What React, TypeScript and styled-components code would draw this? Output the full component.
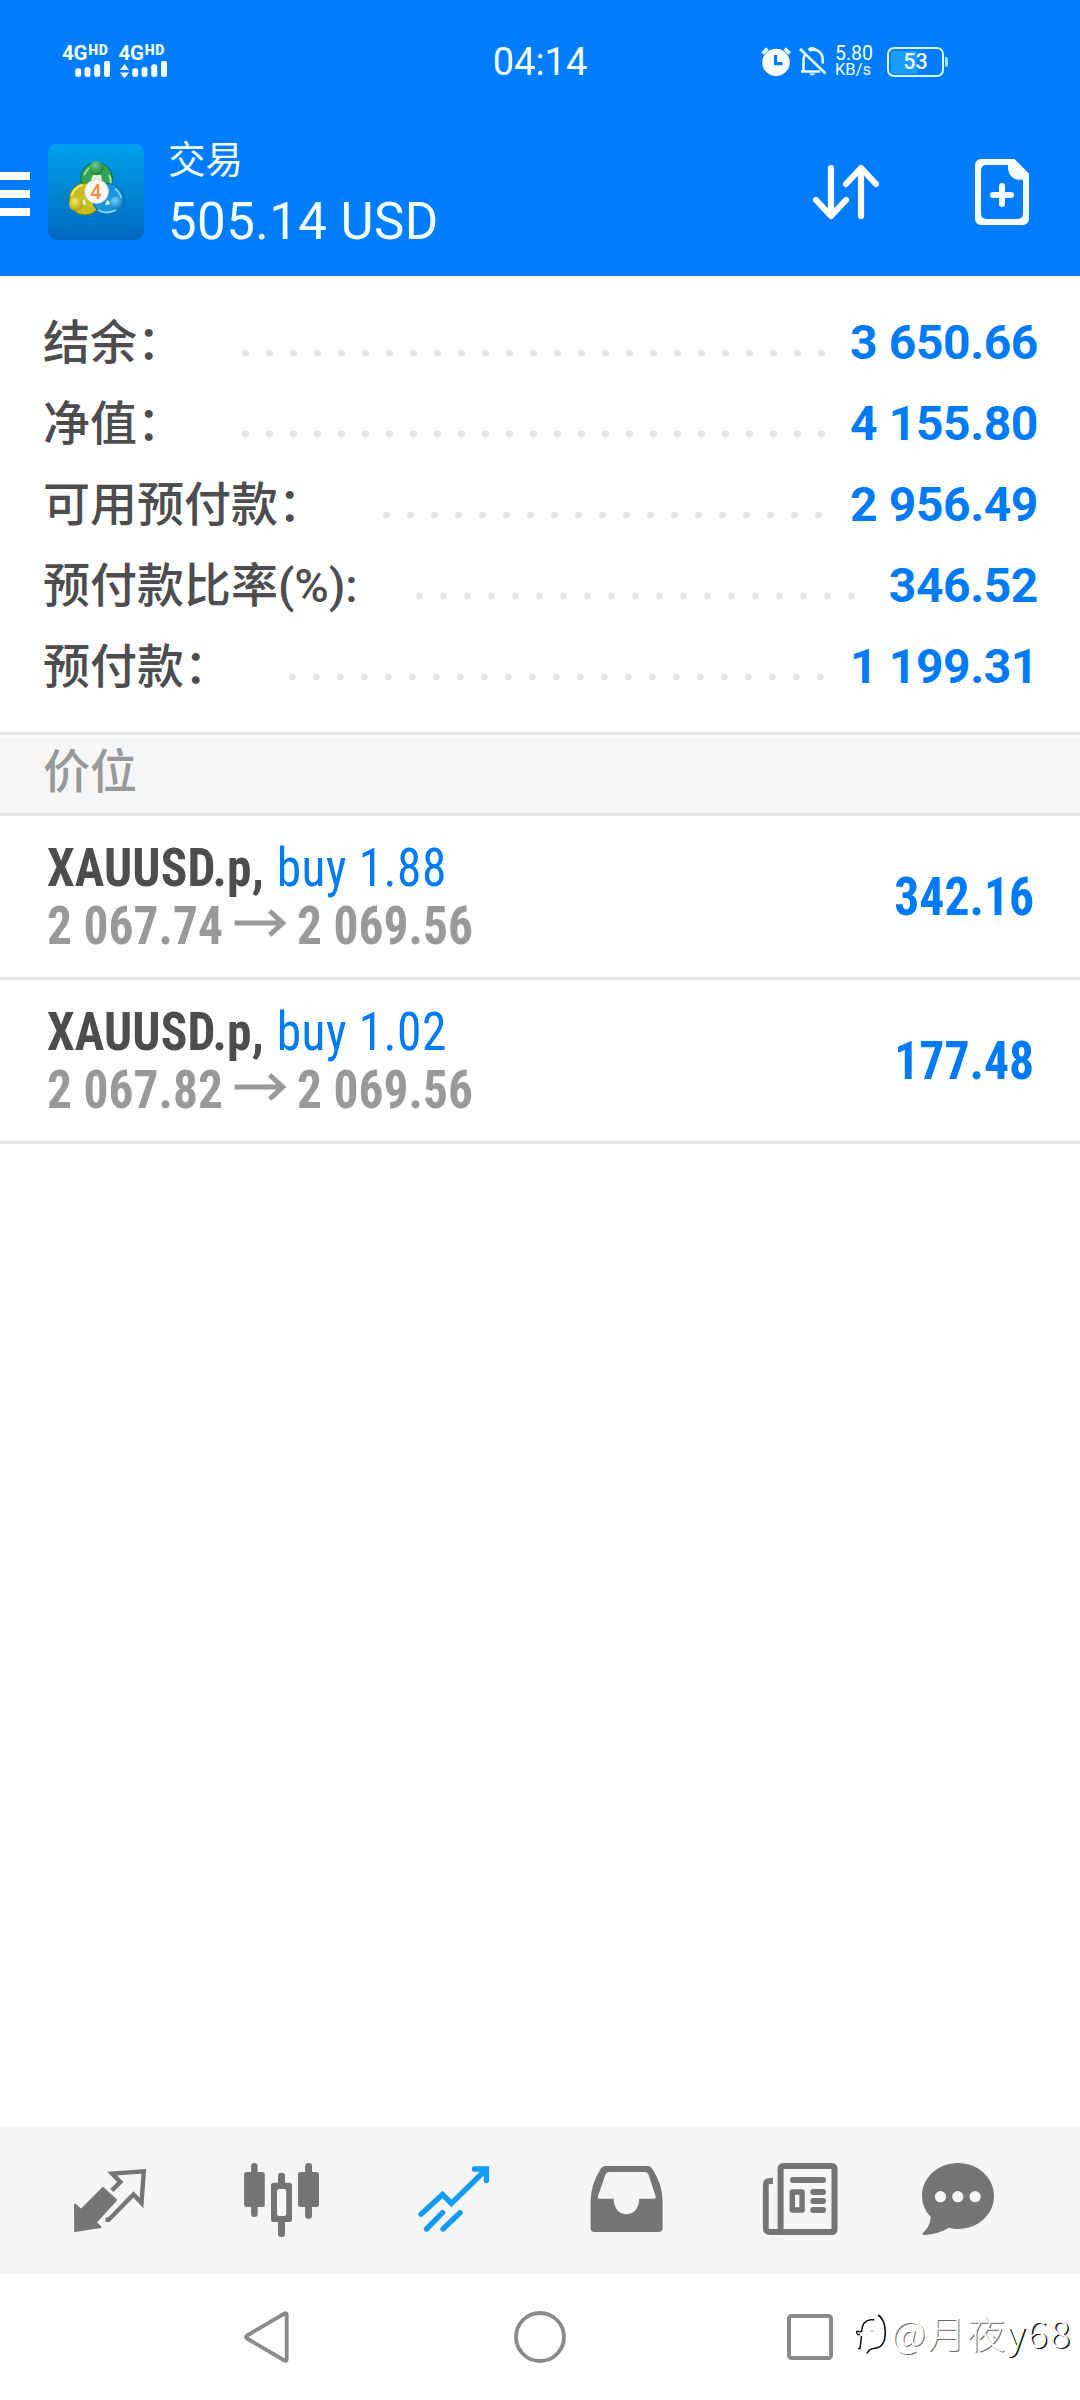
import React from "react";
import styled, { createGlobalStyle } from "styled-components";

const Global = createGlobalStyle`
  * { box-sizing: border-box; }
  body { margin: 0; background: #fefefe; }
`;

const SANS = `Roboto, "Noto Sans CJK SC", sans-serif`;
const NARROW = `"Roboto Condensed", Roboto, "Noto Sans CJK SC", sans-serif`;

const Screen = styled.div`
  position: relative;
  display: flex;
  flex-direction: column;
  width: 1080px;
  height: 2400px;
  overflow: hidden;
  background: #fefefe;
  font-family: ${SANS};
`;

const Header = styled.header`
  display: flex;
  flex-direction: column;
  height: 276px;
  flex: none;
  background: #007dff;
  color: #f2fdff;
`;

const StatusBar = styled.div`
  display: flex;
  align-items: center;
  height: 124px;
  padding: 0 62px;
`;

const StatusSide = styled.div<{ $end?: boolean }>`
  display: flex;
  flex: none;
  width: 429px;
  align-items: center;
  gap: 8px;
  justify-content: ${(p) => (p.$end ? "flex-end" : "flex-start")};
  padding-right: ${(p) => (p.$end ? "70px" : "0")};
`;

const Sim = styled.div`
  display: flex;
  flex-direction: column;
  align-items: flex-start;
  width: 48.5px;
`;

const SimLabel = styled.span`
  display: flex;
  align-items: flex-start;
  gap: 1px;
  height: 16px;
  font-size: 20.5px;
  line-height: 16px;
  font-weight: 700;
  letter-spacing: -0.3px;
`;

const SimSup = styled.span`
  font-size: 14px;
  line-height: 11px;
  font-weight: 900;
  letter-spacing: 0.7px;
`;

const Clock = styled.div`
  width: 98px;
  text-align: center;
  font-size: 38px;
  line-height: 44px;
  font-weight: 450;
  white-space: nowrap;
`;

const Speed = styled.div`
  display: flex;
  flex-direction: column;
  width: 40px;
  margin: 0 4px 0 0;
  font-size: 19.5px;
  line-height: 16px;
`;

const SpeedUnit = styled.span`
  font-size: 16.5px;
`;

const Battery = styled.div`
  display: flex;
  align-items: center;
  justify-content: center;
  width: 57px;
  height: 30px;
  border: 2.5px solid #d5f6ff;
  border-radius: 7px;
  background: linear-gradient(90deg, #1a9dff 52%, transparent 52%) content-box;
  padding: 1.5px;
  font-size: 21.5px;
  line-height: 24px;
  font-weight: 500;
`;

const BatteryTip = styled.span`
  width: 3px;
  height: 10px;
  margin-left: -7px;
  border-radius: 0 2px 2px 0;
  background: #9fe0ff;
`;

const TitleBar = styled.div`
  display: flex;
  align-items: center;
  height: 136px;
  padding-right: 51px;
`;

const Burger = styled.div`
  display: flex;
  flex-direction: column;
  gap: 10px;
  width: 30px;
  margin: 4px 18px 0 0;
`;

const BurgerLine = styled.span`
  height: 8px;
  background: #fff;
`;

const Titles = styled.div`
  display: flex;
  flex: 1;
  flex-direction: column;
  margin-left: 24px;
`;

const Title = styled.h1`
  margin: 0;
  font-size: 37.5px;
  line-height: 56px;
  font-weight: 400;
`;

const Profit = styled.div`
  padding-top: 2px;
  font-size: 51px;
  line-height: 63px;
  font-weight: 400;
  letter-spacing: 0.45px;
`;

const Actions = styled.div`
  display: flex;
  align-items: center;
  gap: 96px;
`;

const Summary = styled.section`
  display: flex;
  flex-direction: column;
  height: 456px;
  flex: none;
  padding: 26px 42px 0 43px;
`;

const SummaryRow = styled.div`
  display: flex;
  align-items: center;
  height: 81px;
`;

const Label = styled.span`
  font-size: 47px;
  line-height: 81px;
  font-weight: 500;
  color: #4d4d4f;
  white-space: nowrap;
`;

const Leader = styled.span`
  flex: 1;
  height: 8px;
  margin: 21px 20px 0 58px;
  background: radial-gradient(circle at 3.5px 4px, #e3e3e3 3px, transparent 4px) 0 0 / 24px 8px repeat-x;
`;

const Value = styled.span`
  font-size: 48px;
  line-height: 81px;
  font-weight: 700;
  letter-spacing: -0.4px;
  color: #007bf5;
  white-space: nowrap;
`;

const SectionHead = styled.div`
  height: 84px;
  flex: none;
  border-top: 3px solid #e4e4e4;
  border-bottom: 3px solid #e4e4e4;
  background: linear-gradient(#fefefe 3px, #f6f6f6 3px);
  padding-left: 43px;
  font-size: 47px;
  line-height: 73px;
  font-weight: 500;
  color: #97999b;
`;

const Position = styled.div`
  display: flex;
  align-items: center;
  justify-content: space-between;
  height: 164px;
  flex: none;
  padding: 0 46px 0 47px;
  border-bottom: 3px solid #e4e4e4;
  font-family: ${NARROW};
  font-stretch: 75%;
  font-size: 54px;
  font-weight: 700;
  white-space: nowrap;
`;

const PositionInfo = styled.div`
  display: flex;
  flex-direction: column;
  transform: scaleX(0.915);
  transform-origin: left center;
`;

const PositionLine = styled.div<{ $muted?: boolean }>`
  display: flex;
  align-items: center;
  gap: ${(p) => (p.$muted ? "13px" : "14px")};
  line-height: 58px;
  letter-spacing: ${(p) => (p.$muted ? "0.05px" : "0.15px")};
  color: ${(p) => (p.$muted ? "#97999b" : "#4d4d4f")};
`;

const Side = styled.span`
  font-weight: 450;
  letter-spacing: 0.5px;
  color: #007bf5;
`;

const PositionProfit = styled.div`
  color: #007bf5;
  transform: scaleX(0.92);
  transform-origin: right center;
`;

const PriceArrow = styled.svg`
  width: 57px;
  height: 28px;
  margin-right: -2px;
  overflow: visible;
`;

const TabBar = styled.nav`
  display: flex;
  flex: none;
  height: 147px;
  margin-top: auto;
  padding: 0 24px;
  background: #f5f5f5;
`;

const Tab = styled.svg<{ $active?: boolean }>`
  width: 172px;
  height: 146px;
  color: ${(p) => (p.$active ? "#129bf6" : "#757575")};
`;

const NavBar = styled.div`
  display: flex;
  flex: none;
  align-items: center;
  justify-content: space-between;
  height: 126px;
  padding: 0 245px 0 242px;
`;

const Watermark = styled.div`
  position: absolute;
  right: 8px;
  top: 2302px;
  display: flex;
  align-items: center;
  gap: 4px;
  font-family: "Noto Sans CJK SC", sans-serif;
  font-size: 38px;
  line-height: 60px;
  font-weight: 300;
  letter-spacing: 1.6px;
  color: #fff;
  text-shadow: 1px 1px 0 #6a6a6a;
  white-space: nowrap;
`;

const WatermarkTail = styled.span`
  letter-spacing: 2px;
  text-shadow: 1.5px 1px 0 #111;
`;

const SUMMARY = [
  ["结余：", "3 650.66"],
  ["净值：", "4 155.80"],
  ["可用预付款：", "2 956.49"],
  ["预付款比率(%):", "346.52"],
  ["预付款：", "1 199.31"],
];

const POSITIONS = [
  { symbol: "XAUUSD.p,", side: "buy 1.88", open: "2 067.74", now: "2 069.56", profit: "342.16" },
  { symbol: "XAUUSD.p,", side: "buy 1.02", open: "2 067.82", now: "2 069.56", profit: "177.48" },
];

const Bars = ({ arrows }: { arrows?: boolean }) => (
  <svg width="49" height="18" viewBox="0 0 49 18" fill="currentColor">
    {arrows && <path d="M1 9 5.5 3 10 9zM1 11.5h9L5.5 17.5z" />}
    <rect x="13.2" y="7.3" width="6" height="8.7" rx="2.5" />
    <rect x="22.5" y="6" width="6" height="10" rx="2.5" />
    <rect x="32.2" y="3.3" width="6" height="12.7" rx="2.5" />
    <rect x="42" y="0" width="6" height="16" rx="2" />
  </svg>
);

const Alarm = () => (
  <svg width="30" height="30" viewBox="761 48 30 30">
    <circle cx="776" cy="63.4" r="13.7" fill="#fff" />
    <path d="M762.5 54.5 767.5 49.5M789.8 54.5 784.8 49.5" stroke="#e8fbff" strokeWidth="3.4" />
    <path d="M775.6 56v8.6h7" stroke="#007dff" strokeWidth="3.2" fill="none" />
  </svg>
);

const Muted = () => (
  <svg width="28" height="30" viewBox="798 48 28 30" fill="none" stroke="#e8fbff" strokeWidth="2.6">
    <path d="M799 50 824.5 74.5" />
    <path d="M800 72.5H819M802.5 72V61q0-3.500 2-6M808 51.500q9-3 13 5 .8 2 .8 8" />
    <path d="M808 74.5h6.500q-3.200 4-6.500 0z" fill="#e8fbff" stroke="none" />
    <path d="M807.500 51 811 48.500 815 51" />
  </svg>
);

const AppLogo = () => (
  <svg width="96" height="96" viewBox="0 0 96 96">
    <defs>
      <linearGradient id="bg" x1="0" y1="0" x2="0" y2="1">
        <stop offset="0" stopColor="#009fee" />
        <stop offset="0.5" stopColor="#0087d2" />
        <stop offset="1" stopColor="#0068c2" />
      </linearGradient>
      <radialGradient id="green" cx="0.4" cy="0.3" r="0.8">
        <stop offset="0" stopColor="#6fc98a" />
        <stop offset="1" stopColor="#0c7a32" />
      </radialGradient>
      <radialGradient id="gold" cx="0.4" cy="0.3" r="0.8">
        <stop offset="0" stopColor="#f2e75c" />
        <stop offset="1" stopColor="#a39a0c" />
      </radialGradient>
      <radialGradient id="sky" cx="0.4" cy="0.3" r="0.8">
        <stop offset="0" stopColor="#6fd0ff" />
        <stop offset="1" stopColor="#0570b8" />
      </radialGradient>
    </defs>
    <rect width="96" height="96" rx="9" fill="url(#bg)" />
    <path d="M0 16H96M0 32H96M0 48H96M0 64H96M0 80H96M16 0V96M32 0V96M48 0V96M64 0V96M80 0V96" stroke="#2aa8ea" strokeOpacity="0.1" />
    <circle cx="48.500" cy="34.500" r="16" fill="#35a355" stroke="#0b6b3a" />
    <path d="M36 31q4-7 8-9M61 31q3 6 1 12" stroke="#a5e0a5" strokeWidth="1.800" fill="none" />
    <circle cx="37" cy="55" r="16" fill="#c8bd1c" stroke="#6b7a1a" />
    <path d="M23.500 52q3-9 11-11" stroke="#f0e98a" strokeWidth="2" fill="none" />
    <circle cx="60" cy="55" r="15.500" fill="#1696dc" stroke="#0a5fa5" />
    <path d="M50 66q8 5 18 0M67 45q5 3 6 9" stroke="#7fd3fa" strokeWidth="1.800" fill="none" />
    <path d="M31 60 37 55 38 61zM65 60 59 56 57 61zM45 31h8l1 5H43z" fill="#e6f3da" />
    <circle cx="48.500" cy="24" r="7.200" fill="url(#green)" />
    <circle cx="28" cy="60" r="7" fill="url(#gold)" />
    <circle cx="68" cy="59" r="6.500" fill="url(#sky)" />
    <circle cx="48.500" cy="47.500" r="12" fill="#f8f8f6" stroke="#c9c9b8" strokeWidth="0.8" />
    <text x="48" y="54.800" textAnchor="middle" fontSize="20" fontWeight="500" fill="#f68a3c">4</text>
  </svg>
);

const Sort = () => (
  <svg width="66" height="56" viewBox="813 164 66 56" fill="none" stroke="#fff" strokeWidth="6.2" strokeLinecap="round" strokeLinejoin="round">
    <path d="M831 168V215.500M816 200 831 216 846 200M861 168.500V216M846 184 861 168 876 184" />
  </svg>
);

const NewOrder = () => (
  <svg width="54" height="66" viewBox="975 159 54 66">
    <path fillRule="evenodd" fill="#f4feff" d="M981 159H1014.500L1029 173.500V219a6 6 0 0 1-6 6H981a6 6 0 0 1-6-6V165a6 6 0 0 1 6-6zM986 165a5 5 0 0 0-5 5V214a5 5 0 0 0 5 5H1018a5 5 0 0 0 5-5V179.700H1018C1011 178.500 1007.500 173 1008 165z" />
    <path d="M993 195H1011M1002 186V204" stroke="#f4feff" strokeWidth="6" strokeLinecap="round" />
  </svg>
);

const Arrow = () => (
  <PriceArrow viewBox="0 0 52 28" preserveAspectRatio="none" fill="none" stroke="currentColor" strokeWidth="5">
    <path d="M0 11H47M35 -1 48 11 35 23" />
  </PriceArrow>
);

const tabBox = (i: number) => `${24 + 172 * i} 2127 172 146`;

const Tabs = () => (
  <TabBar>
    <Tab viewBox={tabBox(0)}>
      <path fill="currentColor" stroke="currentColor" strokeWidth="2" strokeLinejoin="round" d="M103 2188 116 2200 95.500 2222.500 100.500 2227 75.200 2231 75 2204.500 81 2210z" />
      <path fill="none" stroke="currentColor" strokeWidth="4.400" d="M111.800 2190.500 120.300 2182 112 2173.600 143.800 2171.300 141.500 2203 133.500 2194.500 108.500 2220 105.500 2219.500" />
    </Tab>
    <Tab viewBox={tabBox(1)} fill="currentColor">
      <rect x="244.100" y="2172" width="20.700" height="35" rx="2.500" />
      <rect x="251.100" y="2163" width="6.500" height="54" rx="3" />
      <rect x="278" y="2172.700" width="7" height="64.300" rx="3" />
      <rect x="271" y="2182.700" width="21" height="39.300" rx="2.500" />
      <rect x="277" y="2189" width="9.200" height="27" rx="2" fill="#f7f7f7" />
      <rect x="298" y="2172" width="21" height="35" rx="2.500" />
      <rect x="305.100" y="2163" width="6.900" height="55.700" rx="3" />
    </Tab>
    <Tab viewBox={tabBox(2)} $active fill="none" stroke="currentColor" strokeWidth="5.400" strokeLinecap="round">
      <path d="M421 2214.200 442.500 2194.500 451.400 2203.500 486 2169.500M474.500 2169H486.400V2180.500M426.500 2229 442.500 2212.700M443 2229 460 2212.700" />
    </Tab>
    <Tab viewBox={tabBox(3)} fill="currentColor">
      <path fillRule="evenodd" d="M606 2166H647q4 0 6 4 9 14 9.600 30V2228a4 4 0 0 1-4 4H594.600a4 4 0 0 1-4-4V2200q.6-16 9.400-30 2-4 6-4zM609 2172q-2.500 0-3.500 2.500L598 2196q-.8 2.700 1.500 2.700H613.700C613.700 2219.500 639.200 2219.500 639.200 2198.700H654q2.500 0 1.500-2.700L648.500 2174.500q-1-2.500-3.500-2.500z" />
    </Tab>
    <Tab viewBox={tabBox(4)} fill="none" stroke="currentColor" strokeWidth="6">
      <rect x="780.600" y="2166" width="53.900" height="66" rx="2.500" />
      <path d="M773 2181H770q-4.200 0-4.200 4.200V2228q0 4 4.200 4H781" strokeWidth="5.800" />
      <path d="M793 2180H823M813.300 2192H823M813.300 2201H823M813.300 2210H823" strokeLinecap="round" />
      <rect x="792.300" y="2192" width="9.800" height="18" strokeWidth="5.400" strokeLinejoin="round" />
    </Tab>
    <Tab viewBox={tabBox(5)} fill="currentColor">
      <path d="M958 2163c20 0 36 14.500 36 33s-16 33-36 33q-5 0-9-1.200-11 6.500-24.500 7.200-4-.2-1-2.500 6.500-6 7.200-15.500-8.700-9-8.700-21c0-18.500 16-33 36-33z" />
      <g fill="#f5f5f5">
        <circle cx="940.500" cy="2196.700" r="5.600" />
        <circle cx="957.800" cy="2196.700" r="5.600" />
        <circle cx="975.100" cy="2196.700" r="5.600" />
      </g>
    </Tab>
  </TabBar>
);

const Nav = () => (
  <NavBar>
    <svg width="50" height="54" viewBox="242 2310 50 54" fill="none" stroke="#8a8a8a" strokeWidth="3.800" strokeLinejoin="round">
      <path d="M247 2335.500Q245 2337 247 2338.500L284.500 2360.500Q286.700 2361.500 286.700 2359V2315Q286.700 2312.500 284.500 2313.500Z" />
    </svg>
    <svg width="54" height="54" viewBox="513 2310 54 54" fill="none" stroke="#8a8a8a" strokeWidth="3.800">
      <circle cx="540" cy="2337" r="24" />
    </svg>
    <svg width="48" height="54" viewBox="787 2310 48 54" fill="none" stroke="#8a8a8a" strokeWidth="4">
      <rect x="789" y="2316" width="42" height="42" rx="2.500" />
    </svg>
  </NavBar>
);

const WatermarkLogo = () => (
  <svg width="31" height="44" viewBox="856 2317 31 44" fill="none" stroke="#111">
    <path d="M856.500 2341v-2.500h5c.5-7 4-11 9-11.700h4" strokeWidth="1.500" />
    <path d="M861.500 2343l-1.500 12.500h-2M857 2341.500h3" strokeWidth="1.500" />
    <path d="M878 2322c7 4 8.500 17 6.500 25-2 6-5 8-11 8.500-4 .5-5 2-6.500 5" strokeWidth="1.600" />
    <path d="M870 2338h4" strokeWidth="0.800" stroke="#999" />
  </svg>
);

export default function App() {
  return (
    <Screen>
      <Global />
      <Header>
        <StatusBar>
          <StatusSide>
            <Sim>
              <SimLabel>4G<SimSup>HD</SimSup></SimLabel>
              <Bars />
            </Sim>
            <Sim>
              <SimLabel>4G<SimSup>HD</SimSup></SimLabel>
              <Bars arrows />
            </Sim>
          </StatusSide>
          <Clock>04:14</Clock>
          <StatusSide $end>
            <Alarm />
            <Muted />
            <Speed>
              <span>5.80</span>
              <SpeedUnit>KB/s</SpeedUnit>
            </Speed>
            <Battery>53</Battery>
            <BatteryTip />
          </StatusSide>
        </StatusBar>
        <TitleBar>
          <Burger>
            <BurgerLine />
            <BurgerLine />
            <BurgerLine />
          </Burger>
          <AppLogo />
          <Titles>
            <Title>交易</Title>
            <Profit>505.14 USD</Profit>
          </Titles>
          <Actions>
            <Sort />
            <NewOrder />
          </Actions>
        </TitleBar>
      </Header>
      <Summary>
        {SUMMARY.map(([label, value]) => (
          <SummaryRow key={label}>
            <Label>{label}</Label>
            <Leader />
            <Value>{value}</Value>
          </SummaryRow>
        ))}
      </Summary>
      <SectionHead>价位</SectionHead>
      {POSITIONS.map((p) => (
        <Position key={p.profit}>
          <PositionInfo>
            <PositionLine>
              <span>{p.symbol}</span>
              <Side>{p.side}</Side>
            </PositionLine>
            <PositionLine $muted>
              <span>{p.open}</span>
              <Arrow />
              <span>{p.now}</span>
            </PositionLine>
          </PositionInfo>
          <PositionProfit>{p.profit}</PositionProfit>
        </Position>
      ))}
      <Tabs />
      <Nav />
      <Watermark>
        <WatermarkLogo />
        <span>@月夜<WatermarkTail>y68</WatermarkTail></span>
      </Watermark>
    </Screen>
  );
}
